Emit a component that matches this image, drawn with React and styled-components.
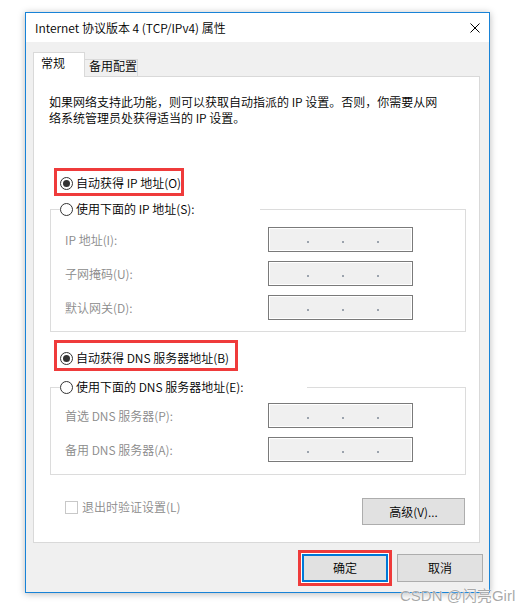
import React from "react";
import styled, { createGlobalStyle, css } from "styled-components";

const GlobalStyle = createGlobalStyle`
  html, body { margin: 0; padding: 0; background: #fff; }
  body {
    font-family: "Microsoft YaHei UI", "Noto Sans CJK SC", sans-serif;
    font-size: 12px;
    font-weight: 350;
    color: #000;
  }
  *, *::before, *::after { box-sizing: border-box; }
`;

const Page = styled.div`
  position: relative;
  width: 531px;
  height: 613px;
  padding: 12px 0 0 25px;
`;

const Window = styled.div`
  width: 465px;
  height: 581px;
  border: 1px solid #1883d7;
  background: #f0f0f0;
  box-shadow: 0 1px 7px rgba(0, 0, 0, 0.28);
  display: flex;
  flex-direction: column;
`;

const TitleBar = styled.div`
  height: 29px;
  flex-shrink: 0;
  background: #fff;
  display: flex;
  align-items: center;
  justify-content: space-between;
  padding: 0 9px;
  line-height: 16px;
  white-space: nowrap;
`;

const Body = styled.div`
  flex: 1;
  display: flex;
  flex-direction: column;
  padding: 10px 6px 0 7px;
`;

const TabStrip = styled.div`
  display: flex;
  align-items: flex-end;
  height: 25px;
  margin-bottom: -1px;
  position: relative;
  z-index: 1;
`;

const Tab = styled.div`
  border: 1px solid #d9d9d9;
  border-bottom: none;
  white-space: nowrap;
  ${(p) =>
    p.$active
      ? css`
          width: 52px;
          height: 25px;
          background: #fff;
          padding: 2px 0 0 7px;
          line-height: 16px;
        `
      : css`
          width: 54px;
          height: 17px;
          margin: 0 0 1px -1px;
          background: #f0f0f0;
          padding: 0 0 0 4px;
          line-height: 12px;
        `}
`;

const Panel = styled.div`
  width: 447px;
  height: 467px;
  background: #fff;
  border: 1px solid #d9d9d9;
  display: flex;
  flex-direction: column;
  flex-shrink: 0;
`;

const Intro = styled.p`
  margin: 17px 0 0 15px;
  line-height: 16px;
  white-space: nowrap;
`;

const Highlight = styled.div`
  position: relative;
  width: fit-content;
  margin: ${(p) => p.$mt}px 0 0 26px;
  &::after {
    content: "";
    position: absolute;
    inset: ${(p) => p.$inset};
    border: 3px solid #ef3b3b;
    pointer-events: none;
  }
`;

const Option = styled.label`
  display: flex;
  align-items: center;
  gap: 3px;
  height: 16px;
  line-height: 16px;
  white-space: nowrap;
  color: ${(p) => (p.$disabled ? "#8a8a8a" : "#000")};
`;

const Radio = styled.span`
  width: 13px;
  height: 13px;
  border-radius: 50%;
  border: 1px solid #333;
  background: #fff;
  flex-shrink: 0;
  display: flex;
  align-items: center;
  justify-content: center;
  &::after {
    content: "";
    width: 7px;
    height: 7px;
    border-radius: 50%;
    background: ${(p) => (p.$checked ? "#333" : "transparent")};
  }
`;

const CheckBox = styled.span`
  width: 13px;
  height: 13px;
  border: 1px solid #c8c8c8;
  background: #fff;
  flex-shrink: 0;
`;

const Group = styled.fieldset`
  margin: ${(p) => p.$mt}px 0 0 16px;
  width: 416px;
  border: 1px solid #dcdcdc;
  padding: ${(p) => p.$pt}px 0 ${(p) => p.$pb}px 0;
  min-inline-size: 0;
  display: flex;
  flex-direction: column;
  gap: 9px;
`;

const Legend = styled.legend`
  width: ${(p) => p.$w}px;
  padding: 0;
  margin-left: 9px;
`;

const FieldRow = styled.div`
  display: flex;
  align-items: center;
  height: 25px;
  padding-left: 14px;
`;

const FieldLabel = styled.span`
  width: 203px;
  color: #8a8a8a;
  white-space: nowrap;
  line-height: 16px;
`;

const IpBox = styled.div`
  width: 145px;
  height: 25px;
  border: 1px solid #7a7a7a;
  box-shadow: inset 0 0 0 1px #fff;
  background: #f0f0f0;
  display: flex;
  align-items: flex-end;
  gap: 33px;
  padding: 0 0 8px 38px;
`;

const Dot = styled.i`
  display: block;
  width: 2px;
  height: 2px;
  background: #9ba3ad;
`;

const BottomRow = styled.div`
  margin: 23px 14px 0 31px;
  display: flex;
  justify-content: space-between;
  align-items: flex-start;
`;

const CheckOption = styled(Option)`
  margin-top: 1px;
  gap: 4px;
`;

const Button = styled.button`
  font: inherit;
  color: #000;
  width: ${(p) => p.$w}px;
  height: ${(p) => p.$h}px;
  padding: 0;
  background: #e1e1e1;
  border: ${(p) => (p.$default ? "2px solid #0078d7" : "1px solid #adadad")};
  line-height: 16px;
  white-space: nowrap;
`;

const ButtonRow = styled.div`
  margin-top: 11px;
  display: flex;
  justify-content: flex-end;
  gap: 9px;
`;

const Annotated = styled.div`
  position: relative;
  display: flex;
  &::after {
    content: "";
    position: absolute;
    inset: -4px;
    border: 3px solid #ef3b3b;
    box-shadow: inset 0 0 0 1px #fff;
    pointer-events: none;
  }
`;

const Watermark = styled.div`
  position: absolute;
  left: 400px;
  top: 588px;
  font-family: "Liberation Sans", "Noto Sans CJK SC", sans-serif;
  font-size: 15px;
  font-weight: 400;
  line-height: 16px;
  color: rgba(140, 140, 140, 0.75);
  text-shadow: 0 0 1px #fff, 0 0 1px #fff;
  white-space: nowrap;
  pointer-events: none;
`;

const CloseIcon = () => (
  <svg width="10" height="10" viewBox="0 0 10 10" aria-hidden="true">
    <path d="M0.5 0.5 L9.5 9.5 M9.5 0.5 L0.5 9.5" stroke="#000" strokeWidth="1" fill="none" />
  </svg>
);

const IpField = () => (
  <IpBox>
    <Dot />
    <Dot />
    <Dot />
  </IpBox>
);

export default function App() {
  return (
    <>
      <GlobalStyle />
      <Page>
        <Window>
          <TitleBar>
            <span>Internet 协议版本 4 (TCP/IPv4) 属性</span>
            <CloseIcon />
          </TitleBar>
          <Body>
            <TabStrip>
              <Tab $active>常规</Tab>
              <Tab>备用配置</Tab>
            </TabStrip>
            <Panel>
              <Intro>
                如果网络支持此功能，则可以获取自动指派的 IP 设置。否则，你需要从网
                <br />
                络系统管理员处获得适当的 IP 设置。
              </Intro>

              <Highlight $mt={49} $inset="-7px -3px -5px -6px">
                <Option>
                  <Radio $checked />
                  自动获得 IP 地址(O)
                </Option>
              </Highlight>

              <Group $mt={10} $pt={10} $pb={11}>
                <Legend $w={200}>
                  <Option>
                    <Radio />
                    使用下面的 IP 地址(S):
                  </Option>
                </Legend>
                <FieldRow>
                  <FieldLabel>IP 地址(I):</FieldLabel>
                  <IpField />
                </FieldRow>
                <FieldRow>
                  <FieldLabel>子网掩码(U):</FieldLabel>
                  <IpField />
                </FieldRow>
                <FieldRow>
                  <FieldLabel>默认网关(D):</FieldLabel>
                  <IpField />
                </FieldRow>
              </Group>

              <Highlight $mt={18} $inset="-10px -9px -5px -6px">
                <Option>
                  <Radio $checked />
                  自动获得 DNS 服务器地址(B)
                </Option>
              </Highlight>

              <Group $mt={13} $pt={8} $pb={12}>
                <Legend $w={247}>
                  <Option>
                    <Radio />
                    使用下面的 DNS 服务器地址(E):
                  </Option>
                </Legend>
                <FieldRow>
                  <FieldLabel>首选 DNS 服务器(P):</FieldLabel>
                  <IpField />
                </FieldRow>
                <FieldRow>
                  <FieldLabel>备用 DNS 服务器(A):</FieldLabel>
                  <IpField />
                </FieldRow>
              </Group>

              <BottomRow>
                <CheckOption $disabled>
                  <CheckBox />
                  退出时验证设置(L)
                </CheckOption>
                <Button $w={103} $h={27}>高级(V)...</Button>
              </BottomRow>
            </Panel>

            <ButtonRow>
              <Annotated>
                <Button $w={86} $h={28} $default>确定</Button>
              </Annotated>
              <Button $w={86} $h={28}>取消</Button>
            </ButtonRow>
          </Body>
        </Window>
        <Watermark>CSDN @闪亮Girl</Watermark>
      </Page>
    </>
  );
}
